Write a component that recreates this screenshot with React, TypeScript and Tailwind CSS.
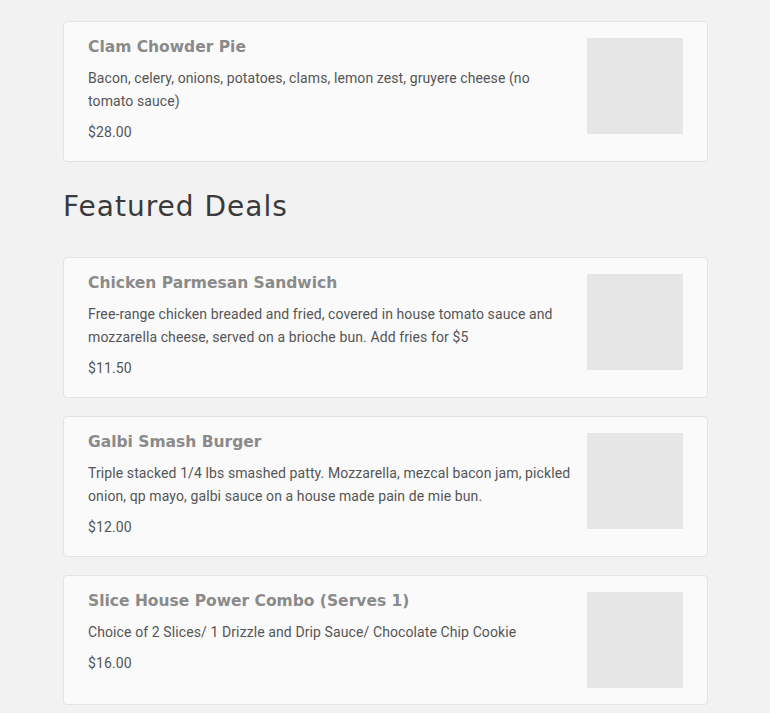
const items = [
  {
    title: "Chicken Parmesan Sandwich",
    desc: "Free-range chicken breaded and fried, covered in house tomato sauce and mozzarella cheese, served on a brioche bun. Add fries for $5",
    price: "$11.50",
  },
  {
    title: "Galbi Smash Burger",
    desc: "Triple stacked 1/4 lbs smashed patty. Mozzarella, mezcal bacon jam, pickled onion, qp mayo, galbi sauce on a house made pain de mie bun.",
    price: "$12.00",
  },
  {
    title: "Slice House Power Combo (Serves 1)",
    desc: "Choice of 2 Slices/ 1 Drizzle and Drip Sauce/ Chocolate Chip Cookie",
    price: "$16.00",
  },
];

function MenuCard({ title, desc, price }: { title: string; desc: string; price: string }) {
  return (
    <div className="flex gap-3 rounded border border-[#e3e3e3] bg-[#fafafa] py-4 pl-6 pr-6">
      <div className="flex-1">
        <h3 className="font-['DejaVu_Sans',sans-serif] text-[15.5px] font-bold leading-[19px] text-[#8a8a8a]">{title}</h3>
        <p className="mt-[10px] font-['Roboto',sans-serif] text-[14px] leading-[23px] tracking-[0.1px] text-[#555]">{desc}</p>
        <p className="mt-[8px] mb-px font-['Roboto',sans-serif] text-[14px] leading-[23px] tracking-[0.1px] text-[#555]">{price}</p>
      </div>
      <div className="h-24 w-24 shrink-0 bg-[#e6e6e6]"></div>
    </div>
  );
}

export default function App() {
  return (
    <div className="min-h-screen bg-[#f2f2f2] pl-[63px] pr-[62px] pt-[21px] pb-8">
      <MenuCard
        title="Clam Chowder Pie"
        desc="Bacon, celery, onions, potatoes, clams, lemon zest, gruyere cheese (no tomato sauce)"
        price="$28.00"
      />
      <h2 className="mt-[28px] mb-[33px] font-['DejaVu_Sans',sans-serif] text-[28px] leading-[34px] tracking-[1px] text-[#3a3a3a]">Featured Deals</h2>
      <div className="flex flex-col gap-[18px]">
        {items.map((it) => (
          <MenuCard key={it.title} {...it} />
        ))}
      </div>
    </div>
  );
}
